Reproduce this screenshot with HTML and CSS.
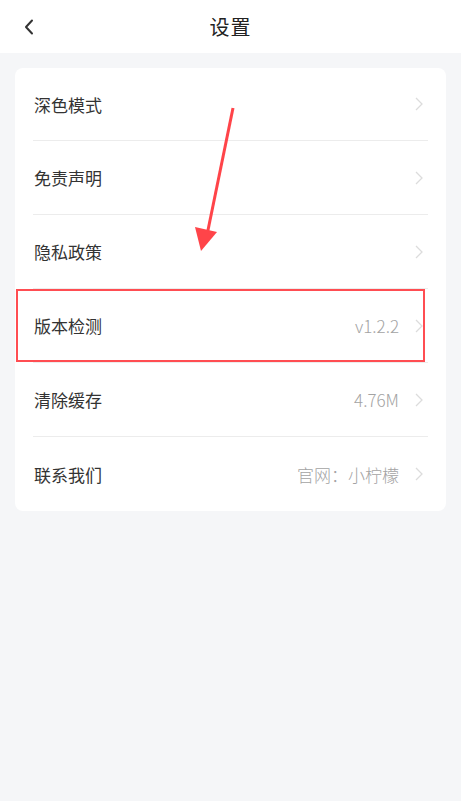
FILE: index.html
```html
<!DOCTYPE html>
<html lang="zh-CN">
<head>
<meta charset="utf-8">
<link rel="stylesheet" href="styles.css">
</head>
<body>
<div class="page">
  <header class="nav">
    <svg class="back" width="10" height="16" viewBox="0 0 10 16"><path d="M8 1.5 L2 8 L8 14.5" fill="none" stroke="#333" stroke-width="2" stroke-linecap="round" stroke-linejoin="round"/></svg>
    <h1 class="title">设置</h1>
  </header>
  <main class="content">
    <section class="card">
      <div class="row"><span class="label">深色模式</span><span class="right"><svg class="chev" width="8" height="14" viewBox="0 0 8 14"><path d="M1 1 L7 7 L1 13" fill="none" stroke="#dcdcdc" stroke-width="1.3"/></svg></span></div>
      <div class="row"><span class="label">免责声明</span><span class="right"><svg class="chev" width="8" height="14" viewBox="0 0 8 14"><path d="M1 1 L7 7 L1 13" fill="none" stroke="#dcdcdc" stroke-width="1.3"/></svg></span></div>
      <div class="row"><span class="label">隐私政策</span><span class="right"><svg class="chev" width="8" height="14" viewBox="0 0 8 14"><path d="M1 1 L7 7 L1 13" fill="none" stroke="#dcdcdc" stroke-width="1.3"/></svg></span></div>
      <div class="row highlight"><span class="label">版本检测</span><span class="right"><span class="value">v1.2.2</span><svg class="chev" width="8" height="14" viewBox="0 0 8 14"><path d="M1 1 L7 7 L1 13" fill="none" stroke="#dcdcdc" stroke-width="1.3"/></svg></span></div>
      <div class="row"><span class="label">清除缓存</span><span class="right"><span class="value">4.76M</span><svg class="chev" width="8" height="14" viewBox="0 0 8 14"><path d="M1 1 L7 7 L1 13" fill="none" stroke="#dcdcdc" stroke-width="1.3"/></svg></span></div>
      <div class="row"><span class="label">联系我们</span><span class="right"><span class="value">官网：小柠檬</span><svg class="chev" width="8" height="14" viewBox="0 0 8 14"><path d="M1 1 L7 7 L1 13" fill="none" stroke="#dcdcdc" stroke-width="1.3"/></svg></span></div>
    </section>
  </main>
  <svg class="arrow" width="461" height="300" viewBox="0 0 461 300">
    <line x1="233" y1="108" x2="207" y2="235" stroke="#ff4449" stroke-width="3"/>
    <polygon points="195,227 217,232 201,251" fill="#ff4449"/>
  </svg>
</div>
</body>
</html>
```

FILE: styles.css
```css
* { box-sizing: border-box; }
html, body { margin: 0; padding: 0; }
body {
  width: 461px;
  height: 801px;
  background: #f5f6f8;
  font-family: "Noto Sans CJK SC", "Noto Sans", sans-serif;
  color: #333;
  overflow: hidden;
}
.page { position: relative; height: 801px; }
.nav {
  height: 53px;
  background: #fff;
  display: flex;
  align-items: center;
  justify-content: center;
  position: relative;
}
.back { position: absolute; left: 24px; top: 19px; }
.title {
  margin: 0;
  font-size: 20px;
  font-weight: 400;
  color: #222;
  line-height: 1;
  letter-spacing: 1px;
}
.content { padding: 15px 15px 0 15px; }
.card {
  background: #fff;
  border-radius: 8px;
  padding: 0 18px;
}
.row {
  height: 74px;
  display: flex;
  align-items: center;
  justify-content: space-between;
  border-bottom: 1px solid #ececec;
  padding-left: 1px;
  position: relative;
}
.row:first-child { height: 73px; }
.row:last-child { border-bottom: none; }
.label { font-size: 17px; color: #333; }
.right { display: flex; align-items: center; }
.value { font-size: 17px; font-weight: 300; color: #a3a3a3; margin-right: 16px; }
.chev { display: block; margin-right: 5px; }
.highlight::after {
  content: "";
  position: absolute;
  left: -17px;
  right: 3px;
  top: 0;
  height: 69px;
  border: 2px solid #ff4d52;
}
.arrow { position: absolute; left: 0; top: 0; pointer-events: none; }
```
